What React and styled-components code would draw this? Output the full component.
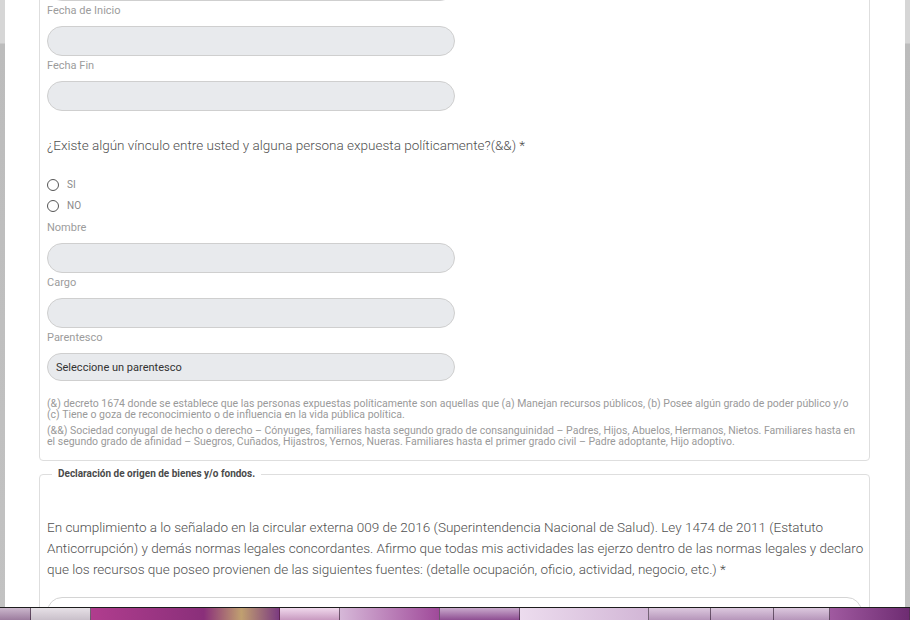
import React from 'react';
import styled, { createGlobalStyle } from 'styled-components';

const GlobalStyle = createGlobalStyle`
  html, body {
    margin: 0;
    padding: 0;
    font-family: Roboto, "Liberation Sans", sans-serif;
  }
`;

const Screen = styled.div`
  height: 620px;
  display: flex;
  flex-direction: column;
  overflow: hidden;
`;

const Backdrop = styled.div`
  flex: 1;
  min-height: 0;
  display: flex;
  padding: 0 5px;
  background: linear-gradient(to bottom, #d6d6d6 0, #d6d6d6 43px, #bcbcbc 44px, #c2c2c2 100%);
`;

const Modal = styled.div`
  flex: 1;
  background: #fff;
  overflow: hidden;
  padding: 0 35px 0 34px;
`;

/* content is scrolled: the first field sits above the visible area */
const Scrolled = styled.div`
  margin-top: -30px;
`;

const Fieldset = styled.fieldset`
  margin: ${p => (p.$first ? '-10px 0 0' : '7px 0 0')};
  padding: 0 7px 13px;
  border: 1px solid #dedede;
  border-radius: 4px;
  min-width: 0;
`;

const Legend = styled.legend`
  margin-left: 5px;
  padding: 0 6px;
  font-size: 10px;
  font-weight: 700;
  color: #4a4a4a;
  line-height: 12px;
`;

const Label = styled.label`
  display: block;
  margin: 3px 0 8px;
  font-size: 11px;
  line-height: 14px;
  color: #9c9c9c;
`;

const Input = styled.div`
  box-sizing: border-box;
  width: ${p => (p.$wide ? '100%' : '408px')};
  height: ${p => p.$h || 30}px;
  border: 1px solid ${p => (p.$wide ? '#d4d4d4' : '#cfcfcf')};
  border-radius: 15px;
  background: ${p => (p.$wide ? '#fff' : '#e8eaed')};
  display: flex;
  align-items: center;
  padding: 0 8px;
  font-size: 11px;
  color: #333;
`;

const Question = styled.p`
  margin: 24px 0 0;
  font-size: 13.5px;
  font-weight: 300;
  line-height: 20px;
  color: #4f4f4f;
`;

const RadioGroup = styled.div`
  margin: 19px 0 5px;
  display: flex;
  flex-direction: column;
`;

const RadioRow = styled.label`
  display: flex;
  align-items: center;
  height: 21px;
  gap: 8px;
  font-size: 10px;
  color: #8a8a8a;
`;

const Circle = styled.span`
  box-sizing: border-box;
  width: 12px;
  height: 12px;
  border: 1.3px solid #555;
  border-radius: 50%;
`;

const Notes = styled.div`
  margin-top: 18px;
  display: flex;
  flex-direction: column;
  gap: 6px;
`;

const Note = styled.p`
  margin: 0;
  font-size: 10.5px;
  line-height: 10.5px;
  color: #9a9a9a;
`;

const Statement = styled.p`
  margin: 37px -6px 17px 0;
  font-size: 13.5px;
  font-weight: 300;
  line-height: 21px;
  color: #4f4f4f;
`;

const Taskbar = styled.div`
  height: 12px;
  border-top: 1px solid #1c1c1c;
  display: flex;
  background: #6a2a6a;
`;

const Tab = styled.div`
  flex: ${p => p.$w} 0 0;
  border-right: 1px solid rgba(40, 20, 40, 0.6);
  background: ${p => p.$bg};
`;

const tabs = [
  { w: 30, bg: 'linear-gradient(#cbb7cc, #9c7c9e)' },
  { w: 60, bg: 'linear-gradient(#e6e0e6, #c9c0ca)' },
  { w: 190, bg: 'linear-gradient(90deg, #b03d8e, #8a2f7a 60%, #c0a070 80%, #7c3b80)' },
  { w: 60, bg: 'linear-gradient(#f0d8ec, #c89ac0)' },
  { w: 100, bg: 'linear-gradient(90deg, #d6b8d8, #a04a9a)' },
  { w: 80, bg: 'linear-gradient(#c9a9cc, #8e4e92)' },
  { w: 130, bg: 'linear-gradient(90deg, #ecdcee, #d2b6d6)' },
  { w: 62, bg: 'linear-gradient(#dcc8de, #b696ba)' },
  { w: 62, bg: 'linear-gradient(#dcc8de, #b696ba)' },
  { w: 56, bg: 'linear-gradient(#dcc8de, #b696ba)' },
  { w: 80, bg: 'linear-gradient(90deg, #a05aa0, #6e2c72)' },
];

const Radio = ({ children }) => (
  <RadioRow>
    <Circle />
    {children}
  </RadioRow>
);

const App = () => (
  <Screen>
    <GlobalStyle />
    <Backdrop>
      <Modal>
        <Scrolled>
          <Fieldset $first>
            <Input />
            <Label>Fecha de Inicio</Label>
            <Input />
            <Label>Fecha Fin</Label>
            <Input />
            <Question>
              ¿Existe algún vínculo entre usted y alguna persona expuesta políticamente?(&amp;&amp;) *
            </Question>
            <RadioGroup>
              <Radio>SI</Radio>
              <Radio>NO</Radio>
            </RadioGroup>
            <Label>Nombre</Label>
            <Input />
            <Label>Cargo</Label>
            <Input />
            <Label>Parentesco</Label>
            <Input $h={28}>Seleccione un parentesco</Input>
            <Notes>
              <Note>
                (&amp;) decreto 1674 donde se establece que las personas expuestas políticamente son
                aquellas que (a) Manejan recursos públicos, (b) Posee algún grado de poder público y/o
                (c) Tiene o goza de reconocimiento o de influencia en la vida pública política.
              </Note>
              <Note>
                (&amp;&amp;) Sociedad conyugal de hecho o derecho – Cónyuges, familiares hasta segundo
                grado de consanguinidad – Padres, Hijos, Abuelos, Hermanos, Nietos. Familiares hasta en
                el segundo grado de afinidad – Suegros, Cuñados, Hijastros, Yernos, Nueras. Familiares
                hasta el primer grado civil – Padre adoptante, Hijo adoptivo.
              </Note>
            </Notes>
          </Fieldset>
          <Fieldset>
            <Legend>Declaración de origen de bienes y/o fondos.</Legend>
            <Statement>
              En cumplimiento a lo señalado en la circular externa 009 de 2016 (Superintendencia
              Nacional de Salud). Ley 1474 de 2011 (Estatuto Anticorrupción) y demás normas legales
              concordantes. Afirmo que todas mis actividades las ejerzo dentro de las normas legales y
              declaro que los recursos que poseo provienen de las siguientes fuentes: (detalle
              ocupación, oficio, actividad, negocio, etc.) *
            </Statement>
            <Input $wide />
          </Fieldset>
        </Scrolled>
      </Modal>
    </Backdrop>
    <Taskbar>
      {tabs.map((t, i) => (
        <Tab key={i} $w={t.w} $bg={t.bg} />
      ))}
    </Taskbar>
  </Screen>
);

export default App;
